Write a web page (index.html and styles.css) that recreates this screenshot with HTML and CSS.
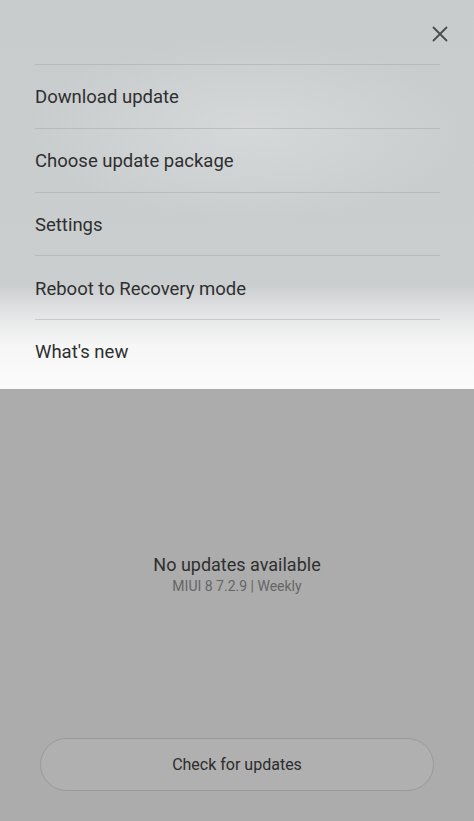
FILE: index.html
```html
<!DOCTYPE html>
<html>
<head>
<meta charset="utf-8">
<link rel="stylesheet" href="styles.css">
</head>
<body>
<div class="screen">
  <div class="menu">
    <div class="top">
      <svg class="close" width="16" height="16" viewBox="0 0 16 16"><path d="M1 1L15 15M15 1L1 15" stroke="#4a4c4d" stroke-width="1.8" fill="none"/></svg>
    </div>
    <ul class="items">
      <li>Download update</li>
      <li>Choose update package</li>
      <li>Settings</li>
      <li>Reboot to Recovery mode</li>
      <li>What's new</li>
    </ul>
  </div>
  <div class="main">
    <div class="status">
      <div class="title">No updates available</div>
      <div class="sub">MIUI 8 7.2.9 | Weekly</div>
    </div>
    <div class="btn-wrap">
      <div class="btn">Check for updates</div>
    </div>
  </div>
</div>
</body>
</html>
```
FILE: styles.css
```css
html, body {
  margin: 0;
  padding: 0;
}
body {
  font-family: Roboto, "Noto Sans", sans-serif;
  background: #acacac;
}
.screen {
  width: 474px;
  height: 821px;
  display: flex;
  flex-direction: column;
  overflow: hidden;
}
.menu {
  height: 389px;
  background:
    radial-gradient(ellipse 220px 90px at 250px 130px, rgba(225,227,228,0.5), rgba(225,227,228,0)),
    linear-gradient(to bottom, #c9cccd 0px, #cbcecf 285px, #e4e5e6 315px, #f6f6f6 345px, #fbfbfb 389px);
  flex: none;
}
.top {
  height: 64px;
  display: flex;
  justify-content: flex-end;
  align-items: flex-start;
  padding: 0 26px 0 0;
  box-sizing: border-box;
}
.close {
  margin-top: 26px;
}
.items {
  list-style: none;
  margin: 0 34px 0 35px;
  padding: 0;
}
.items li {
  border-top: 1px solid rgba(160,163,165,0.45);
  display: flex;
  align-items: center;
  font-size: 18.5px;
  color: #2e2f30;
  padding-top: 2px;
  height: 60.75px;
}
.main {
  flex: 1;
  display: flex;
  flex-direction: column;
}
.status {
  margin-top: 165px;
  text-align: center;
}
.title {
  font-size: 18px;
  color: #2f2f2f;
  line-height: 22px;
}
.sub {
  font-size: 14px;
  color: #666666;
  line-height: 18px;
  margin-top: 1px;
}
.btn-wrap {
  margin-top: auto;
  padding: 0 40px 30px 40px;
}
.btn {
  height: 51px;
  border: 1px solid #9a9a9a;
  border-radius: 27px;
  background: #b0b0b0;
  display: flex;
  align-items: center;
  justify-content: center;
  font-size: 16px;
  color: #2c2c2c;
}
```
